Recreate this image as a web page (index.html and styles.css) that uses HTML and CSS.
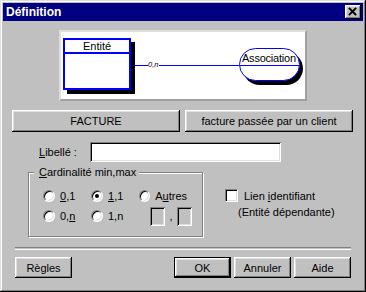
FILE: index.html
```html
<!DOCTYPE html>
<html lang="fr">
<head>
  <meta charset="UTF-8" />
  <title>Définition</title>
  <link rel="stylesheet" href="styles.css">
</head>
<body>
  <div class="window">
    <div class="titlebar">
      <span class="title">Définition</span>
      <button class="close raised">
        <svg width="16" height="14" viewBox="0 0 16 14">
          <path d="M4.5 3.5L10.5 9.5M10.5 3.5L4.5 9.5" stroke="#000" stroke-width="1.8" stroke-linecap="square" />
        </svg>
      </button>
    </div>

    <div class="content">
      <div class="diagram">
        <svg class="er" width="244" height="67" viewBox="0 0 244 67">
          <rect x="6" y="10" width="68" height="52" fill="#000" />
          <rect x="3" y="7" width="66" height="50" fill="#fff" stroke="#0000ff" stroke-width="2" />
          <line x1="2" y1="21" x2="70" y2="21" stroke="#0000ff" stroke-width="2" />
          <text x="36" y="18" text-anchor="middle">Entité</text>

          <path d="M74 33.5H87M98 33.5H179" stroke="#0000ff" fill="none" />
          <text class="card" x="87" y="35">0,n</text>

          <rect x="182" y="20" width="60" height="33" rx="16.5" fill="#000" />
          <rect x="178.5" y="16.5" width="60" height="32" rx="16" fill="#fff" stroke="#0000ff" />
          <line x1="179" y1="33.5" x2="238" y2="33.5" stroke="#0000ff" />
          <text x="181" y="30" textLength="54">Association</text>
        </svg>
      </div>

      <div class="names">
        <button class="btn raised">FACTURE</button>
        <button class="btn raised">facture passée par un client</button>
      </div>

      <div class="libelle">
        <label class="lbl" for="libelle"><u>L</u>ibellé :</label>
        <input class="field sunken" id="libelle" type="text" />
      </div>

      <div class="middle">
        <div class="group">
          <span class="legend"><u>C</u>ardinalité min,max</span>
          <div class="row">
            <label class="opt"><span class="radio"></span><span><u>0</u>,1</span></label>
            <label class="opt"><span class="radio checked"></span><span><u>1</u>,1</span></label>
            <label class="opt"><span class="radio"></span><span>A<u>u</u>tres</span></label>
          </div>
          <div class="row">
            <label class="opt"><span class="radio"></span><span>0,<u>n</u></span></label>
            <label class="opt"><span class="radio"></span><span>1,n</span></label>
            <div class="minmax">
              <span class="mini sunken"></span>
              <span class="comma">,</span>
              <span class="mini sunken"></span>
            </div>
          </div>
        </div>

        <div class="ident">
          <label class="check-row"><span class="checkbox"></span><span>Lien <u>i</u>dentifiant</span></label>
          <div class="sub">(Entité dépendante)</div>
        </div>
      </div>

      <div class="sep"></div>

      <div class="actions">
        <button class="btn small raised">Règles</button>
        <div class="right">
          <button class="btn small default">OK</button>
          <button class="btn small raised">Annuler</button>
          <button class="btn small raised">Aide</button>
        </div>
      </div>
    </div>
  </div>
</body>
</html>
```

FILE: styles.css
```css
body {
  margin: 0;
  background: #c0c0c0;
  font-family: "Liberation Sans", Arial, sans-serif;
  font-size: 11px;
  color: #000;
}
.window {
  width: 366px;
  height: 292px;
  box-sizing: border-box;
  padding: 3px;
  background: #c0c0c0;
  box-shadow: inset -1px -1px #000, inset 1px 1px #dfdfdf, inset -2px -2px #808080, inset 2px 2px #fff;
}
.titlebar {
  height: 18px;
  background: #000080;
  display: flex;
  align-items: center;
  justify-content: space-between;
  padding: 0 2px 0 3px;
}
.title {
  color: #fff;
  font-weight: bold;
  font-size: 12px;
}
button {
  font-family: inherit;
  font-size: 11px;
  color: #000;
  background: #c0c0c0;
  border: none;
  padding: 0;
  margin: 0;
}
.close {
  width: 16px;
  height: 14px;
  display: flex;
}
.raised {
  box-shadow: inset -1px -1px #000, inset 1px 1px #fff, inset -2px -2px #808080, inset 2px 2px #dfdfdf;
}
.sunken {
  box-shadow: inset 1px 1px #808080, inset -1px -1px #fff, inset 2px 2px #000, inset -2px -2px #dfdfdf;
}
.default {
  box-shadow: inset 0 0 0 1px #000, inset -2px -2px #000, inset 2px 2px #fff, inset -3px -3px #808080, inset 3px 3px #dfdfdf;
}
.content {
  padding: 0 10px 0 9px;
}
.diagram {
  width: 248px;
  height: 71px;
  box-sizing: border-box;
  margin: 9px 0 0 47px;
  background: #fff;
  border: 2px solid;
  border-color: #dfdfdf #a0a0a0 #a0a0a0 #dfdfdf;
}
.er {
  display: block;
  font-family: "Liberation Sans", Arial, sans-serif;
  font-size: 11px;
}
.er .card {
  font-size: 7.5px;
  font-style: italic;
  fill: #000;
}
.names {
  display: flex;
  gap: 5px;
  margin-top: 9px;
}
.names .btn {
  width: 168px;
  height: 22px;
}
.libelle {
  display: flex;
  align-items: center;
  margin-top: 10px;
}
.lbl {
  width: 51px;
  margin-left: 27px;
}
.field {
  width: 191px;
  height: 20px;
  box-sizing: border-box;
  border: none;
  padding: 0 4px;
  background: #fff;
  outline: none;
  font-family: inherit;
  font-size: 11px;
}
.middle {
  display: flex;
  margin-top: 10px;
}
.group {
  position: relative;
  width: 175px;
  height: 65px;
  box-sizing: border-box;
  margin-left: 16px;
  border: 1px solid #808080;
  box-shadow: inset 1px 1px #fff, 1px 1px 0 #fff;
  padding: 13px 0 0 14px;
}
.legend {
  position: absolute;
  top: -8px;
  left: 5px;
  padding: 0 3px 0 5px;
  background: #c0c0c0;
  line-height: 14px;
}
.row {
  display: flex;
  height: 20px;
  align-items: center;
}
.opt {
  width: 48px;
  display: flex;
  align-items: center;
  gap: 5px;
}
.radio {
  width: 12px;
  height: 12px;
  box-sizing: border-box;
  border-radius: 50%;
  background: #fff;
  border: 1px solid;
  border-color: #808080 #fff #fff #808080;
  box-shadow: inset 1px 1px #000, inset -1px -1px #dfdfdf;
  display: flex;
  align-items: center;
  justify-content: center;
}
.radio.checked::after {
  content: '';
  width: 4px;
  height: 4px;
  border-radius: 50%;
  background: #000;
}
.minmax {
  display: flex;
  align-items: center;
  margin-left: 11px;
}
.mini {
  width: 15px;
  height: 19px;
  background: #c0c0c0;
}
.comma {
  width: 12px;
  text-align: center;
}
.ident {
  margin-left: 22px;
  padding-top: 17px;
}
.check-row {
  display: flex;
  align-items: center;
  gap: 6px;
}
.checkbox {
  width: 13px;
  height: 13px;
  box-sizing: border-box;
  background: #fff;
  border: 1px solid;
  border-color: #808080 #fff #fff #808080;
  box-shadow: inset 1px 1px #000, inset -1px -1px #dfdfdf;
}
.sub {
  margin: 4px 0 0 13px;
}
.sep {
  height: 1px;
  margin: 10px 2px 0 3px;
  border-top: 1px solid #808080;
  border-bottom: 1px solid #fff;
}
.actions {
  display: flex;
  justify-content: space-between;
  margin: 7px 2px 0 3px;
}
.right {
  display: flex;
  gap: 3px;
}
.small {
  width: 57px;
  height: 21px;
}
```
